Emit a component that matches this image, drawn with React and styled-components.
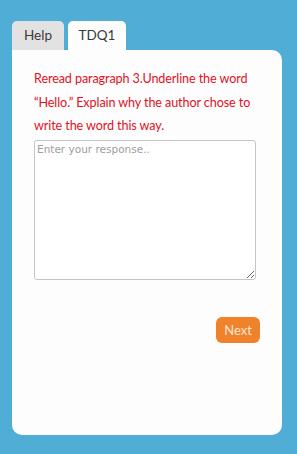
import styled, { createGlobalStyle } from 'styled-components';

const Global = createGlobalStyle`
	html, body {
		margin: 0;
		padding: 0;
		background: #4fadd6;
	}
	body {
		font-family: Lato, 'Liberation Sans', sans-serif;
	}
`;

export default function App() {
	return (
		<>
			<Global />
			<Page>
				<Tabs>
					<Tab>Help</Tab>
					<Tab active>TDQ1</Tab>
				</Tabs>
				<Card>
					<Prompt>
						Reread paragraph 3.Underline the word “Hello.” Explain why the author chose to
						write the word this way.
					</Prompt>
					<Response placeholder='Enter your response..' />
					<Actions>
						<NextButton>Next</NextButton>
					</Actions>
				</Card>
			</Page>
		</>
	);
}

// ########## styled components ##########
const Page = styled.div`
	width: 297px;
	height: 454px;
	box-sizing: border-box;
	padding: 21px 15px 19px 12px;
	display: flex;
	flex-direction: column;
`;

const Tabs = styled.div`
	display: flex;
	gap: 4px;
	height: 29px;
`;

const Tab = styled.div`
	box-sizing: border-box;
	height: 29px;
	padding-top: 6px;
	border-radius: 5px 5px 0 0;
	font-size: 13.5px;
	color: #3a3a3a;
	background: ${(p) => (p.active ? '#fdfdfd' : '#e2e2e2')};
	width: ${(p) => (p.active ? '58px' : '52px')};
	text-align: center;
`;

const Card = styled.div`
	flex: 1;
	background: #fdfdfd;
	border-radius: 0 10px 10px 10px;
	padding: 17px 22px 0 22px;
	display: flex;
	flex-direction: column;
`;

const Prompt = styled.p`
	margin: 0;
	width: 224px;
	color: #e3111d;
	font-size: 12.6px;
	line-height: 23.5px;
	letter-spacing: -0.1px;
`;

const Response = styled.textarea`
	margin-top: 2px;
	width: 222px;
	height: 140px;
	box-sizing: border-box;
	border: 1px solid #c4c4c4;
	border-radius: 3px;
	background: #fff;
	padding: 2px 2px;
	font-family: 'DejaVu Sans', 'Open Sans', sans-serif;
	font-size: 10.5px;
	&::placeholder {
		color: #9e9e9e;
	}
`;

const Actions = styled.div`
	display: flex;
	justify-content: flex-end;
	margin-top: 37px;
`;

const NextButton = styled.button`
	background: #f0822c;
	color: #fde6d2;
	border: none;
	border-radius: 6px;
	width: 44px;
	height: 26px;
	padding: 0;
	font-family: Lato, 'Liberation Sans', sans-serif;
	font-size: 13px;
`;
